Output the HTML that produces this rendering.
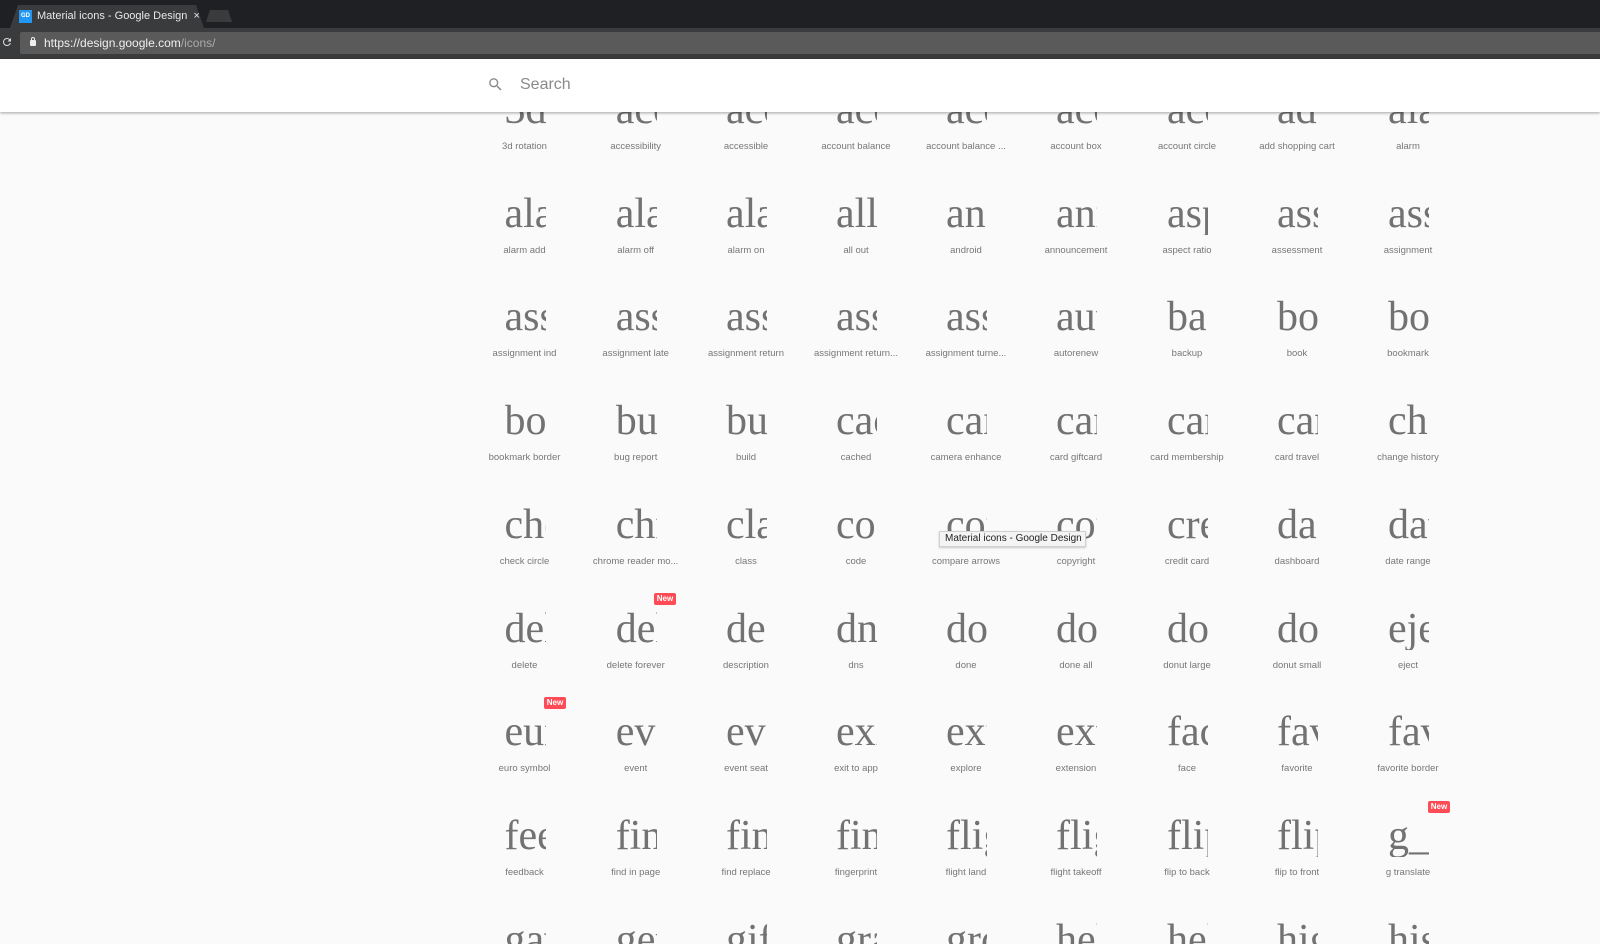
<!DOCTYPE html>
<html><head><meta charset="utf-8"><style>
*{margin:0;padding:0;box-sizing:border-box}
html,body{width:1600px;height:944px;overflow:hidden}
body{background:#fafafa;font-family:"Liberation Sans",sans-serif}
#wrap{position:relative;width:1600px;height:944px;overflow:hidden;background:#fafafa}
#tabs{position:absolute;left:0;top:0;width:1600px;height:28px;background:#1f2023}
#tab{position:absolute;left:10px;top:5px;width:194px;height:23px;background:#3a3b3d;clip-path:polygon(0 100%,8px 0,186px 0,194px 100%)}
#tab .fav{position:absolute;left:9px;top:5px;width:13px;height:13px;background:#2196f3;color:#fff;font-size:6px;font-weight:bold;line-height:13px;text-align:center}
#tab .t{position:absolute;left:27px;top:5px;font-size:11px;color:#e8e8e8;white-space:nowrap}
#tab2{position:absolute;left:206px;top:10px;width:26px;height:12px;background:#3a3b3d;clip-path:polygon(0 100%,4px 0,22px 0,26px 100%)}
#addr{position:absolute;left:0;top:28px;width:1600px;height:31px;background:#3a3b3d}
#url{position:absolute;left:20px;top:4px;width:1580px;height:22px;background:#5a5a5a;border-radius:2px 0 0 2px}
#url .t{position:absolute;left:24px;top:4px;font-size:12px;color:#f0f0f0}
#url .t span{color:#aaa}
#lock{position:absolute;left:10px;top:8px;width:6px;height:6px;background:#eee;border-radius:1px}
#lock:before{content:"";position:absolute;left:1px;top:-3px;width:4px;height:4px;border:1px solid #eee;border-bottom:none;border-radius:2px 2px 0 0;box-sizing:border-box}
#reload{position:absolute;left:1px;top:36px}
#hdr{position:absolute;left:0;top:59px;width:1600px;height:53px;background:#fff;box-shadow:0 1px 3px rgba(0,0,0,.35);z-index:5}
#hdr .s{position:absolute;left:520px;top:17px;font-size:16px;color:#8a8a8a}
#hdr svg{position:absolute;left:487px;top:17px}
.c{position:absolute;width:110px}
.g{position:absolute;left:35px;width:41px;overflow:hidden;white-space:nowrap;font-family:"Liberation Serif",serif;font-size:42px;line-height:42px;color:#727272}
.l{position:absolute;left:-20px;width:150px;text-align:center;font-size:9.5px;line-height:14px;color:#777;white-space:nowrap}
.new{position:absolute;width:22px;height:12px;background:#ff4b55;color:#fff;font-size:8px;font-weight:bold;line-height:12px;text-align:center;border-radius:2px}
#tip{position:absolute;left:939px;top:531px;width:147px;height:16px;background:#f4f4f4;border:1px solid #d0d0d0;box-shadow:0 1px 2px rgba(0,0,0,.2);font-size:10px;line-height:14px;padding-left:5px;color:#222;z-index:6}
</style></head><body><div id="wrap">
<div id="tabs"><div id="tab"><div class="fav">GD</div><div class="t">Material icons - Google Design&nbsp; ×</div></div><div id="tab2"></div></div>
<div id="addr"><div id="url"><div id="lock"></div><div class="t">https://design.google.com<span>/icons/</span></div></div></div>
<svg id="reload" width="12" height="12" viewBox="0 0 24 24"><path fill="#ddd" d="M17.65 6.35A7.958 7.958 0 0 0 12 4a8 8 0 1 0 7.73 10h-2.08A6 6 0 1 1 12 6c1.66 0 3.14.69 4.22 1.78L13 11h7V4l-2.35 2.35z"/></svg>
<div id="hdr"><svg width="17" height="17" viewBox="0 0 24 24"><path fill="#8a8a8a" d="M15.5 14h-.79l-.28-.27A6.47 6.47 0 0 0 16 9.5 6.5 6.5 0 1 0 9.5 16c1.61 0 3.09-.59 4.23-1.57l.27.28v.79l5 4.99L20.49 19l-4.99-5zm-6 0C7.01 14 5 11.99 5 9.5S7.01 5 9.5 5 14 7.01 14 9.5 11.99 14 9.5 14z"/></svg><div class="s">Search</div></div>
<div id="grid"></div>
<div class="new" style="left:654px;top:593px">New</div>
<div class="new" style="left:544px;top:697px">New</div>
<div class="new" style="left:1428px;top:801px">New</div>
<div id="tip">Material icons - Google Design</div>
</div>
<script>
var rows=[
[["3d_rotation","3d rotation"],["accessibility","accessibility"],["accessible","accessible"],["account_balance","account balance"],["account_balance_wallet","account balance ..."],["account_box","account box"],["account_circle","account circle"],["add_shopping_cart","add shopping cart"],["alarm","alarm"]],
[["alarm_add","alarm add"],["alarm_off","alarm off"],["alarm_on","alarm on"],["all_out","all out"],["android","android"],["announcement","announcement"],["aspect_ratio","aspect ratio"],["assessment","assessment"],["assignment","assignment"]],
[["assignment_ind","assignment ind"],["assignment_late","assignment late"],["assignment_return","assignment return"],["assignment_returned","assignment return..."],["assignment_turned_in","assignment turne..."],["autorenew","autorenew"],["backup","backup"],["book","book"],["bookmark","bookmark"]],
[["bookmark_border","bookmark border"],["bug_report","bug report"],["build","build"],["cached","cached"],["camera_enhance","camera enhance"],["card_giftcard","card giftcard"],["card_membership","card membership"],["card_travel","card travel"],["change_history","change history"]],
[["check_circle","check circle"],["chrome_reader_mode","chrome reader mo..."],["class","class"],["code","code"],["compare_arrows","compare arrows"],["copyright","copyright"],["credit_card","credit card"],["dashboard","dashboard"],["date_range","date range"]],
[["delete","delete"],["delete_forever","delete forever"],["description","description"],["dns","dns"],["done","done"],["done_all","done all"],["donut_large","donut large"],["donut_small","donut small"],["eject","eject"]],
[["euro_symbol","euro symbol"],["event","event"],["event_seat","event seat"],["exit_to_app","exit to app"],["explore","explore"],["extension","extension"],["face","face"],["favorite","favorite"],["favorite_border","favorite border"]],
[["feedback","feedback"],["find_in_page","find in page"],["find_replace","find replace"],["fingerprint","fingerprint"],["flight_land","flight land"],["flight_takeoff","flight takeoff"],["flip_to_back","flip to back"],["flip_to_front","flip to front"],["g_translate","g translate"]],
[["gavel","gavel"],["get_app","get app"],["gif","gif"],["grade","grade"],["group_work","group work"],["help","help"],["help_outline","help outline"],["highlight_off","highlight off"],["history","history"]]
];
var cx=[524.5,635.7,746,856,966,1076,1187,1297,1408];
var ly=[147,251,354,458,562,666,769,873,977];
var h="";
rows.forEach(function(r,i){r.forEach(function(c,j){
var x=cx[j]-55,y=ly[i];
h+='<div class="c" style="left:'+x+'px;top:0"><div class="g" style="top:'+(y-58)+'px">'+c[0]+'</div><div class="l" style="top:'+(y-7)+'px">'+c[1]+'</div></div>';
});});
document.getElementById("grid").innerHTML=h;
</script>
</body></html>
